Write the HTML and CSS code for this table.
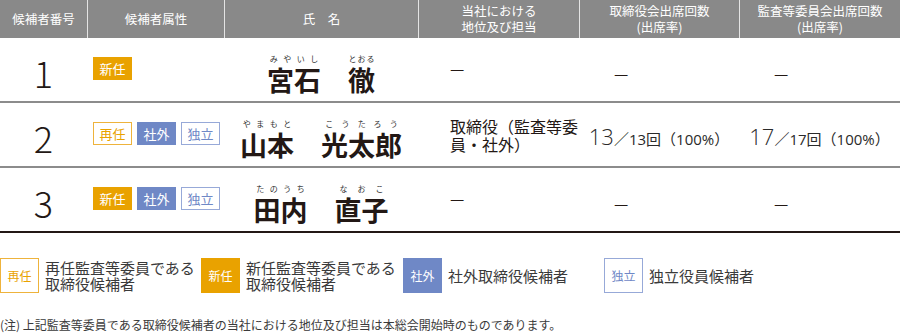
FILE: index.html
```html
<!DOCTYPE html>
<html lang="ja">
<head>
<meta charset="utf-8">
<link rel="stylesheet" href="styles.css">
</head>
<body>
<div class="table">
  <div class="row head">
    <div class="th">候補者番号</div>
    <div class="th">候補者属性</div>
    <div class="th">氏　名</div>
    <div class="th">当社における<br>地位及び担当</div>
    <div class="th">取締役会出席回数<br>(出席率)</div>
    <div class="th">監査等委員会出席回数<br>(出席率)</div>
  </div>
  <div class="row body">
    <div class="td num">1</div>
    <div class="td attrs"><span class="badge new">新任</span></div>
    <div class="td name"><ruby>宮石<rt>みやいし</rt></ruby>　<ruby>徹<rt>とおる</rt></ruby></div>
    <div class="td pos"><span class="dash">—</span></div>
    <div class="td att"><span class="dash low">—</span></div>
    <div class="td att"><span class="dash low">—</span></div>
  </div>
  <div class="row body">
    <div class="td num">2</div>
    <div class="td attrs"><span class="badge re">再任</span><span class="badge out">社外</span><span class="badge ind">独立</span></div>
    <div class="td name"><ruby>山本<rt>やまもと</rt></ruby>　<ruby>光太郎<rt>こうたろう</rt></ruby></div>
    <div class="td pos">取締役（監査等委員・社外）</div>
    <div class="td att center"><span class="big">13</span>／<span class="lat">13</span>回（<span class="lat">100%</span>）</div>
    <div class="td att center"><span class="big">17</span>／<span class="lat">17</span>回（<span class="lat">100%</span>）</div>
  </div>
  <div class="row body last">
    <div class="td num">3</div>
    <div class="td attrs"><span class="badge new">新任</span><span class="badge out">社外</span><span class="badge ind">独立</span></div>
    <div class="td name"><ruby>田内<rt>たのうち</rt></ruby>　<ruby>直子<rt>なおこ</rt></ruby></div>
    <div class="td pos"><span class="dash">—</span></div>
    <div class="td att"><span class="dash low">—</span></div>
    <div class="td att"><span class="dash low">—</span></div>
  </div>
</div>

<div class="legend">
  <div class="legend-item"><span class="badge lg re">再任</span><span class="legend-text">再任監査等委員である<br>取締役候補者</span></div>
  <div class="legend-item"><span class="badge lg new">新任</span><span class="legend-text">新任監査等委員である<br>取締役候補者</span></div>
  <div class="legend-item"><span class="badge lg out">社外</span><span class="legend-text">社外取締役候補者</span></div>
  <div class="legend-item"><span class="badge lg ind">独立</span><span class="legend-text">独立役員候補者</span></div>
</div>

<p class="note">(注) 上記監査等委員である取締役候補者の当社における地位及び担当は本総会開始時のものであります。</p>
</body>
</html>
```

FILE: styles.css
```css
* { box-sizing: border-box; }

body {
  margin: 0;
  width: 900px;
  font-family: "Noto Sans CJK JP", "Noto Sans", sans-serif;
  color: #231815;
  background: #fff;
}

.row {
  display: grid;
  grid-template-columns: 87px 137px 194px 161px 160px 161px;
}

.head {
  height: 38px;
  background: #898989;
}

.th {
  display: flex;
  align-items: center;
  justify-content: center;
  text-align: center;
  color: #fff;
  font-size: 12.5px;
  line-height: 16px;
}

.th + .th {
  border-left: 1px solid #e4e4e4;
}

.body {
  height: 65px;
  border-bottom: 2px solid #8c8c8c;
}

.body.last {
  border-bottom: 2px solid #231815;
}

.td {
  display: flex;
  align-items: center;
}

.num {
  justify-content: center;
  font-family: "Noto Sans CJK JP", sans-serif;
  font-size: 36px;
  font-weight: 300;
  line-height: 1;
  padding-top: 4px;
}

.attrs {
  padding-left: 6px;
  gap: 5px;
  padding-bottom: 2px;
}

.badge {
  display: inline-flex;
  align-items: center;
  justify-content: center;
  width: 39px;
  height: 23px;
  font-size: 13px;
  line-height: 1;
  border: 1px solid transparent;
}

.badge.new {
  background: #e9a200;
  border-color: #e9a200;
  color: #fff;
}

.badge.re {
  background: #fff;
  border-color: #eeb33c;
  color: #e9a200;
}

.badge.out {
  background: #6f88c6;
  border-color: #6f88c6;
  color: #fff;
}

.badge.ind {
  background: #fff;
  border-color: #97a9d8;
  color: #6f88c6;
}

.badge.lg {
  width: 39px;
  height: 35px;
  font-size: 12px;
  flex: none;
}

.name {
  justify-content: center;
  font-size: 27px;
  font-weight: 700;
  line-height: 1;
  padding-top: 6px;
  white-space: nowrap;
}

.name rt {
  font-size: 8px;
  font-weight: 400;
  color: #333;
  line-height: 1;
  padding-bottom: 3px;
}

.pos {
  padding-left: 32px;
  font-size: 16px;
  line-height: 18px;
}

.att {
  padding-left: 35px;
  font-size: 15px;
}

.att.center {
  padding-left: 0;
  justify-content: center;
  align-items: baseline;
  padding-top: 22px;
  font-weight: 400;
  color: #2a2a2a;
}

.lat {
  font-family: "Open Sans", "Noto Sans", sans-serif;
  font-weight: 400;
}

.big {
  font-family: "Open Sans", "Noto Sans", sans-serif;
  font-size: 22px;
  font-weight: 300;
  line-height: 1;
}

.dash {
  font-size: 16px;
  line-height: 1;
  padding-bottom: 4px;
}

.dash.low {
  padding-bottom: 0;
  padding-top: 6px;
}

.legend {
  display: grid;
  grid-template-columns: 201px 202px 201px 296px;
  margin-top: 25px;
  height: 35px;
}

.legend-item {
  display: flex;
  align-items: center;
  gap: 6px;
}

.legend-text {
  font-size: 15px;
  line-height: 16px;
  color: #3a3a3a;
  white-space: nowrap;
}

.note {
  margin: 24px 0 0;
  font-size: 12px;
  line-height: 16px;
  color: #3a3a3a;
  white-space: nowrap;
}
```
